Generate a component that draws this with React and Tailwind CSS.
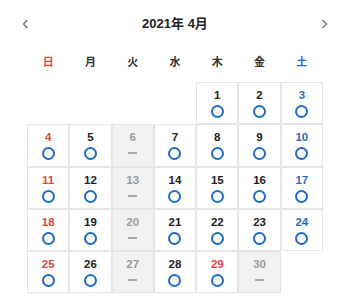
import React from "react";

const RED = "text-[#e2453b]";
const BLUE = "text-[#2a6cc2]";

function Chevron({ dir }) {
  return (
    <svg width="7" height="10" viewBox="0 0 7 10" fill="none">
      {dir === "left" ? (
        <polyline points="5.5,1 1.5,5 5.5,9" stroke="#777" strokeWidth="1.4" />
      ) : (
        <polyline points="1.5,1 5.5,5 1.5,9" stroke="#777" strokeWidth="1.4" />
      )}
    </svg>
  );
}

const weekdays = [
  { t: "日", c: RED },
  { t: "月", c: "text-[#333]" },
  { t: "火", c: "text-[#333]" },
  { t: "水", c: "text-[#333]" },
  { t: "木", c: "text-[#333]" },
  { t: "金", c: "text-[#333]" },
  { t: "土", c: BLUE },
];

const closed = new Set([6, 13, 20, 27, 30]);
const holidays = new Set([29]);

function Cell({ d }) {
  if (d === null) return <div className="aspect-square" />;
  const dow = (d + 3) % 7; // April 1 2021 = Thursday (4)
  const isClosed = closed.has(d);
  let color = "text-[#222]";
  if (isClosed) color = "text-[#9c9c9c]";
  else if (dow === 0 || holidays.has(d)) color = RED;
  else if (dow === 6) color = BLUE;
  return (
    <div
      className={`aspect-square border border-[#e4e4e4] flex flex-col items-center pt-[5px] ${
        isClosed ? "bg-[#f1f1f1]" : "bg-white"
      }`}
    >
      <div className={`text-[11.5px] leading-[14px] font-bold ${color}`}>{d}</div>
      {isClosed ? (
        <div className="mt-[8px] w-[9px] h-[2px] bg-[#ababab]" />
      ) : (
        <div className="mt-[3px] w-[13px] h-[13px] rounded-full border-2 border-[#1f6bc9]" />
      )}
    </div>
  );
}

export default function App() {
  const days = [null, null, null, null];
  for (let i = 1; i <= 30; i++) days.push(i);
  days.push(null);
  return (
    <div
      className="w-[350px] h-[301px] bg-white overflow-hidden"
      style={{ fontFamily: '"Liberation Sans", "Noto Sans CJK JP", sans-serif' }}
    >
      <div className="h-[48px] flex items-center justify-between px-[22px]">
        <Chevron dir="left" />
        <div className="text-[13px] font-bold text-[#222]">2021年 4月</div>
        <Chevron dir="right" />
      </div>
      <div className="mx-[27px] grid grid-cols-7 h-[28px] items-center">
        {weekdays.map((w) => (
          <div key={w.t} className={`text-center text-[11px] font-bold ${w.c}`}>
            {w.t}
          </div>
        ))}
      </div>
      <div className="mx-[27px] mt-[6px] grid grid-cols-7">
        {days.map((d, i) => (
          <Cell key={i} d={d} />
        ))}
      </div>
    </div>
  );
}
